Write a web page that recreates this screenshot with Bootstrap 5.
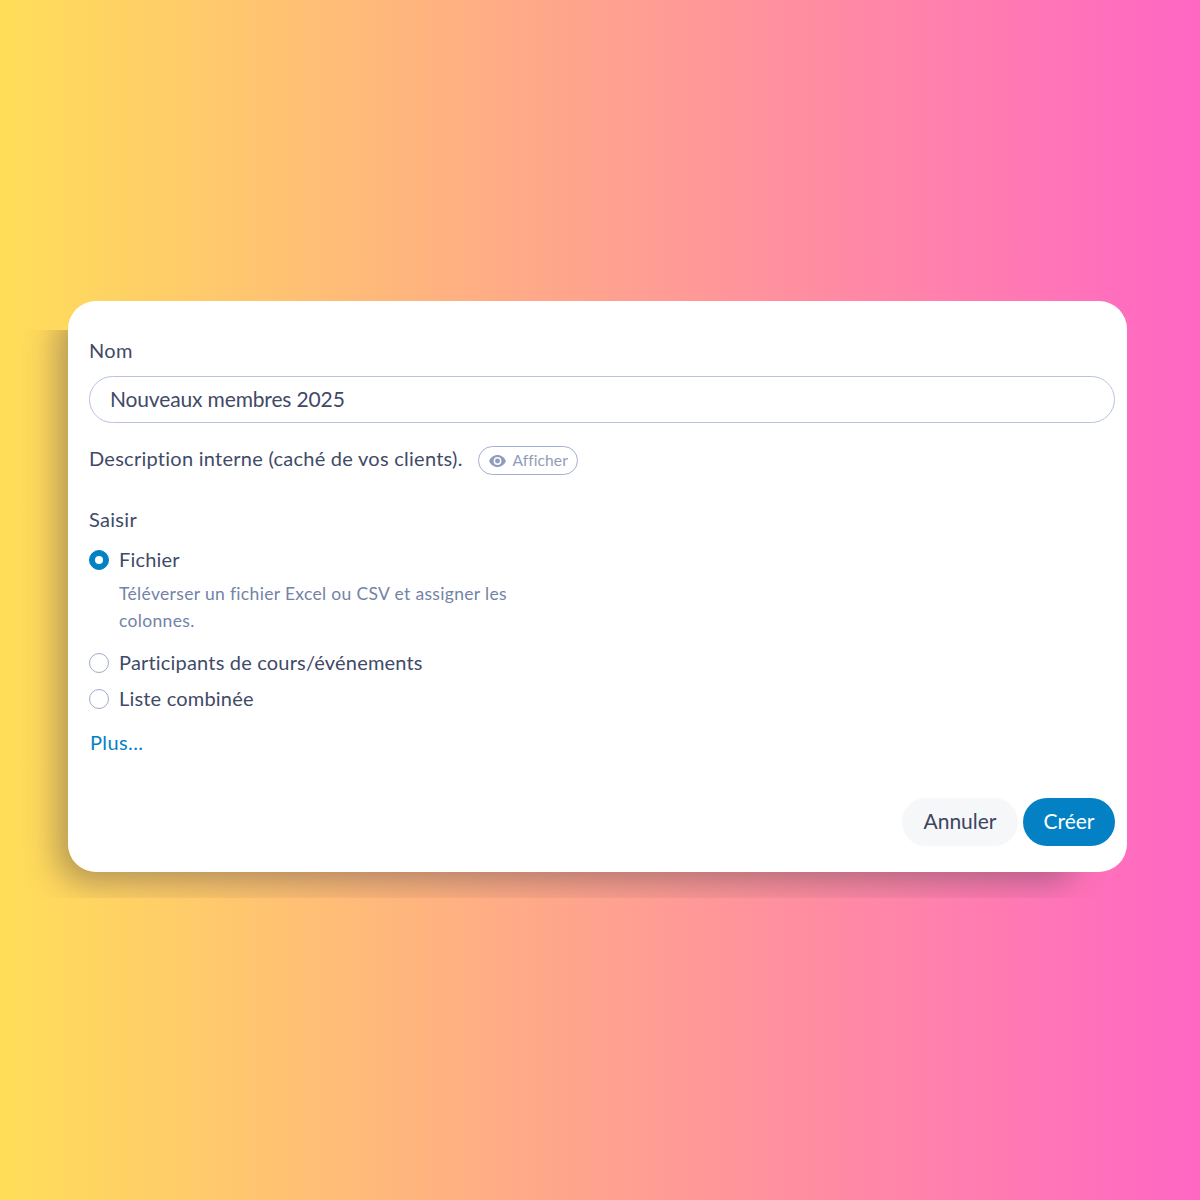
<!DOCTYPE html>
<html lang="fr">
<head>
<meta charset="utf-8">
<title>Nouvelle liste</title>
<link href="https://cdn.jsdelivr.net/npm/bootstrap@5.3.0/dist/css/bootstrap.min.css" rel="stylesheet">
<style>
html, body { height: 100%; }
body { margin: 0; background: linear-gradient(90deg, #ffde59, #ff66c4); font-family: "Lato", "Liberation Sans", sans-serif; color: #3f4a68; }
.stage { width: 1200px; height: 1200px; padding: 301px 73px 0 68px; }
.dialog-wrap { position: relative; height: 571px; }
.shadow-clip { position: absolute; top: 29px; bottom: -26px; left: -68px; right: 0; overflow: hidden; }
.shadow-shape { position: absolute; top: -29px; bottom: 26px; left: 68px; right: 40px; border-radius: 28px; box-shadow: -10px 10px 32px rgba(70, 60, 70, .42); }
.dialog-box { position: relative; height: 571px; background: #fff; border-radius: 28px; padding: 37px 12px 26px 21px; }
.field-label { font-size: 20px; line-height: 24px; margin: 0; color: #3f4a68; letter-spacing: .3px; }
.name-input.form-control { height: 47px; margin-top: 14px; border-radius: 24px; border: 1.5px solid #b9c3de; padding: 0 20px 2px; font: inherit; font-size: 21px; letter-spacing: -.15px; color: #3f4a68; box-shadow: none; }
.desc-row { margin-top: 23px; height: 28px; font-size: 20px; line-height: 26px; gap: 15px; }
.desc-text { margin-bottom: 4px; letter-spacing: .26px; }
.show-btn.btn { height: 29px; width: 100px; border: 1.5px solid #a3afcf; border-radius: 15px; padding: 0 0 0 2px; font-size: 15.5px; letter-spacing: .1px; color: #8f9cbd; background: #fff; gap: 6px; margin-top: 1px; }
.eye-icon { width: 17px; height: 12px; fill: #8f9cbd; }
.type-label { margin-top: 33px; }
.choice.form-check { display: flex; align-items: center; height: 24px; min-height: 0; padding: 0; margin: 0; gap: 10px; font-size: 20px; line-height: 24px; letter-spacing: .19px; }
.choice .form-check-input { float: none; width: 20px; height: 20px; margin: 0; border: 1.5px solid #9fabcb; flex: none; }
.choice .form-check-input:checked { background-color: #0481c4; border-color: #0481c4; background-size: 16px 16px; }
.choice .form-check-label { color: #3f4a68; margin-bottom: 2px; }
.choice-first { margin-top: 17px !important; }
.choice-help { margin: 8px 0 0 30px; width: 410px; font-size: 17.5px; line-height: 27px; letter-spacing: .33px; color: #7383a8; }
.choice-second { margin-top: 17px !important; }
.choice-third { margin-top: 12px !important; }
.more-link { display: block; margin: 19px 0 0 1px; font-size: 20px; line-height: 24px; letter-spacing: .4px; color: #0481c4; text-decoration: none; }
.actions { margin-top: 44px; gap: 5px; }
.act-btn.btn { height: 48px; border-radius: 24px; border: 0; padding: 0 0 2px; font-size: 21px; line-height: 46px; }
.act-cancel.btn { width: 116px; background: #f6f7f9; color: #3b4560; }
.act-create.btn { width: 92px; background: #0481c4; color: #fff; }
</style>
</head>
<body>
<div class="stage">
  <div class="dialog-wrap">
    <div class="shadow-clip"><div class="shadow-shape"></div></div>
    <div class="dialog-box">
      <label class="field-label d-block" for="listName">Nom</label>
      <input id="listName" class="form-control name-input" type="text" value="Nouveaux membres 2025">
      <div class="d-flex align-items-center desc-row">
        <span class="desc-text">Description interne (caché de vos clients).</span>
        <button type="button" class="btn show-btn d-inline-flex align-items-center justify-content-center">
          <svg class="eye-icon" viewBox="0 0 24 17" aria-hidden="true"><path fill-rule="evenodd" d="M12 0C6.6 0 2.2 3.4 0 8.5 2.2 13.600 6.600 17 12 17s9.800-3.400 12-8.500C21.800 3.400 17.400 0 12 0zm0 14a5.500 5.500 0 1 1 0-11 5.500 5.500 0 0 1 0 11zm0-9a3.500 3.500 0 1 0 0 7 3.500 3.500 0 0 0 0-7z"/></svg>
          <span>Afficher</span>
        </button>
      </div>
      <p class="field-label type-label">Saisir</p>
      <div class="form-check choice choice-first">
        <input class="form-check-input" type="radio" name="kind" id="kindFile" checked>
        <label class="form-check-label" for="kindFile">Fichier</label>
      </div>
      <p class="choice-help">Téléverser un fichier Excel ou CSV et assigner les colonnes.</p>
      <div class="form-check choice choice-second">
        <input class="form-check-input" type="radio" name="kind" id="kindEvents">
        <label class="form-check-label" for="kindEvents">Participants de cours/événements</label>
      </div>
      <div class="form-check choice choice-third">
        <input class="form-check-input" type="radio" name="kind" id="kindCombined">
        <label class="form-check-label" for="kindCombined">Liste combinée</label>
      </div>
      <a class="more-link" href="#">Plus...</a>
      <div class="d-flex justify-content-end actions">
        <button type="button" class="btn act-btn act-cancel">Annuler</button>
        <button type="button" class="btn act-btn act-create">Créer</button>
      </div>
    </div>
  </div>
</div>
<script src="https://cdn.jsdelivr.net/npm/bootstrap@5.3.0/dist/js/bootstrap.bundle.min.js"></script>
</body>
</html>
